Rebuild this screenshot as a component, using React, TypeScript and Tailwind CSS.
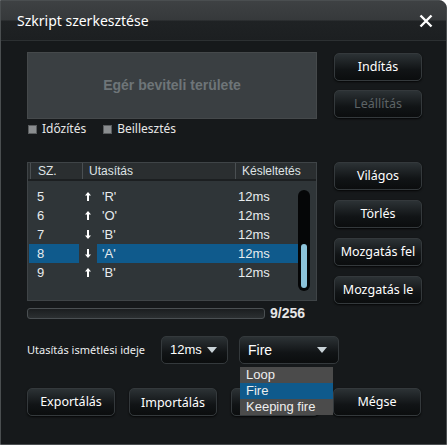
import { useState } from "react";

const rows = [
  { n: 5, dir: "up", key: "'R'", delay: "12ms" },
  { n: 6, dir: "up", key: "'O'", delay: "12ms" },
  { n: 7, dir: "down", key: "'B'", delay: "12ms" },
  { n: 8, dir: "down", key: "'A'", delay: "12ms" },
  { n: 9, dir: "up", key: "'B'", delay: "12ms" },
];

const btn =
  "flex items-center justify-center w-[88px] h-[28px] rounded-[5px] border border-[#34393c] bg-[linear-gradient(#2c3235,#111416_60%,#0b0d0e)] text-[12.5px] text-white shadow-[0_1px_2px_rgba(0,0,0,0.8)]";

function Arrow({ dir }: { dir: string }) {
  return (
    <svg width="6" height="9" viewBox="0 0 6 9" className={dir === "down" ? "rotate-180" : ""}>
      <path d="M3 0 L6 3.5 L4 3.5 L4 9 L2 9 L2 3.5 L0 3.5 Z" fill="#fff" />
    </svg>
  );
}

function Tri() {
  return (
    <svg width="10" height="6" viewBox="0 0 10 6">
      <path d="M0 0 H10 L5 6 Z" fill="#c9d3d8" />
    </svg>
  );
}

export default function App() {
  const [selected, setSelected] = useState(8);
  const [mode, setMode] = useState("Fire");

  return (
    <div
      className="relative w-[447px] h-[445px] overflow-hidden rounded-tr-[8px] border border-[#4a4e50] bg-[#16191b] text-white"
      style={{ fontFamily: '"Noto Sans", "Open Sans", sans-serif' }}
    >
      {/* title bar */}
      <div className="flex items-center justify-between h-[40px] pl-[16px] pr-[13px] border-b border-[#2c3032] bg-[linear-gradient(#3e4143_0,#36393b_48%,#1f2224_52%,#1c1f21_100%)]">
        <span className="text-[14px] leading-none">Szkript szerkesztése</span>
        <svg width="14" height="14" viewBox="0 0 14 14">
          <path d="M1.5 1.5 L12.5 12.5 M12.5 1.5 L1.5 12.5" stroke="#fff" strokeWidth="2.4" />
        </svg>
      </div>

      <div className="relative pl-[26px] pt-[11px]">
        {/* top row */}
        <div className="flex">
          <div className="w-[290px] h-[67px] flex items-center justify-center bg-[#3a3f42] border border-[#45494b]">
            <span
              className="text-[14px] font-bold text-[#6e7578]"
              style={{ fontFamily: '"Liberation Sans", Arial, sans-serif' }}
            >
              Egér beviteli területe
            </span>
          </div>
          <div className="ml-[17px] mt-[1px] flex flex-col gap-[9px]">
            <button className={btn}>Indítás</button>
            <button className={btn + " !text-[#5d6366]"}>Leállítás</button>
          </div>
        </div>

        {/* checkboxes */}
        <div className="flex items-center h-[18px] mt-[1px] text-[12px] text-[#e8e8e8]">
          <span className="w-[9px] h-[9px] ml-[1px] bg-[#8a8d8f] border border-[#5a5d5f]" />
          <span className="ml-[5px]">Időzítés</span>
          <span className="w-[9px] h-[9px] ml-[17px] bg-[#8a8d8f] border border-[#5a5d5f]" />
          <span className="ml-[5px]">Beillesztés</span>
        </div>

        {/* table + side buttons */}
        <div className="flex mt-[24px]">
          <div
            className="relative w-[290px] h-[139px] bg-[#2f3538] border border-[#3f4447]"
            style={{ fontFamily: '"Liberation Sans", Arial, sans-serif' }}
          >
            <div className="flex h-[18px] items-center text-[12px] text-[#dfe3e5] bg-[#2a2e30] border-b-2 border-[#1c1f21]">
              <div className="w-[52px] h-full flex items-center pl-[7px] border-l border-[#4a4f52] ml-[2px]">SZ.</div>
              <div className="w-[153px] h-full flex items-center pl-[6px] border-l border-[#4a4f52]">Utasítás</div>
              <div className="flex-1 h-full flex items-center pl-[6px] border-l border-[#4a4f52]">Késleltetés</div>
            </div>
            <div className="pt-[6px]">
              {rows.map((r) => {
                const sel = r.n === selected;
                return (
                  <div
                    key={r.n}
                    onClick={() => setSelected(r.n)}
                    className="flex h-[19px] items-center text-[13px] text-[#e8ecee]"
                  >
                    <div className={"ml-[1px] w-[50px] h-full flex items-center pl-[8px] " + (sel ? "bg-[#0f5a8c]" : "")}>
                      {r.n}
                    </div>
                    <div className="w-[18px] h-full flex items-center pl-[6px]">
                      <Arrow dir={r.dir} />
                    </div>
                    <div className={"w-[201px] h-full flex items-center " + (sel ? "bg-[#0f5a8c]" : "")}>
                      <span className="w-[141px] pl-[5px]">{r.key}</span>
                      <span>{r.delay}</span>
                    </div>
                  </div>
                );
              })}
            </div>
            {/* scrollbar */}
            <div className="absolute left-[270px] top-[27px] w-[12px] h-[101px] rounded-[6px] bg-[#050607] p-[3px] flex flex-col justify-end">
              <div className="w-[6px] h-[44px] rounded-[3px] bg-[#8cc3da]" />
            </div>
          </div>
          <div className="ml-[17px] flex flex-col gap-[10px]">
            <button className={btn}>Világos</button>
            <button className={btn}>Törlés</button>
            <button className={btn}>Mozgatás fel</button>
            <button className={btn}>Mozgatás le</button>
          </div>
        </div>

        {/* progress */}
        <div className="flex items-center mt-[-1px]">
          <div className="w-[238px] h-[11px] rounded-[3px] border border-[#4a4f52] bg-[linear-gradient(#1b1e20,#2b2f31)]" />
          <span
            className="ml-[5px] text-[14px] font-bold text-[#e6e6e6]"
            style={{ fontFamily: '"Liberation Sans", Arial, sans-serif' }}
          >
            9/256
          </span>
        </div>

        {/* repeat row */}
        <div className="flex items-center mt-[12px] h-[28px]">
          <span className="w-[134px] text-[11px] text-[#eceeef]">Utasítás ismétlési ideje</span>
          <div
            className="flex items-center justify-between w-[67px] h-[28px] pl-[8px] pr-[10px] rounded-[5px] border border-[#34393c] bg-[linear-gradient(#2c3235,#111416_60%,#0b0d0e)] text-[13px]"
            style={{ fontFamily: '"Liberation Sans", Arial, sans-serif' }}
          >
            12ms <Tri />
          </div>
          <div
            className="ml-[11px] flex items-center justify-between w-[100px] h-[28px] pl-[8px] pr-[11px] rounded-[5px] border border-[#34393c] bg-[linear-gradient(#2c3235,#111416_60%,#0b0d0e)] text-[14px]"
            style={{ fontFamily: '"Liberation Sans", Arial, sans-serif' }}
          >
            {mode} <Tri />
          </div>
        </div>

        {/* bottom buttons */}
        <div className="flex mt-[24px]">
          <button className={btn}>Exportálás</button>
          <button className={btn + " ml-[14px] !items-start pt-[5px]"}>Importálás</button>
          <button className={btn + " ml-[14px]"} aria-label="Mentés" />
          <button className={btn + " ml-[14px]"}>Mégse</button>
        </div>

        {/* open dropdown list */}
        <div
          className="absolute left-[239px] top-[326px] w-[93px] bg-[#4b4b4b] text-[13px] text-[#eeeeee]"
          style={{ fontFamily: '"Liberation Sans", Arial, sans-serif' }}
        >
          {["Loop", "Fire", "Keeping fire"].map((o) => (
            <div
              key={o}
              onClick={() => setMode(o)}
              className={"h-[16px] leading-[16px] pl-[6px] " + (o === mode ? "bg-[#0f5a8c]" : "")}
            >
              {o}
            </div>
          ))}
        </div>
      </div>
    </div>
  );
}
